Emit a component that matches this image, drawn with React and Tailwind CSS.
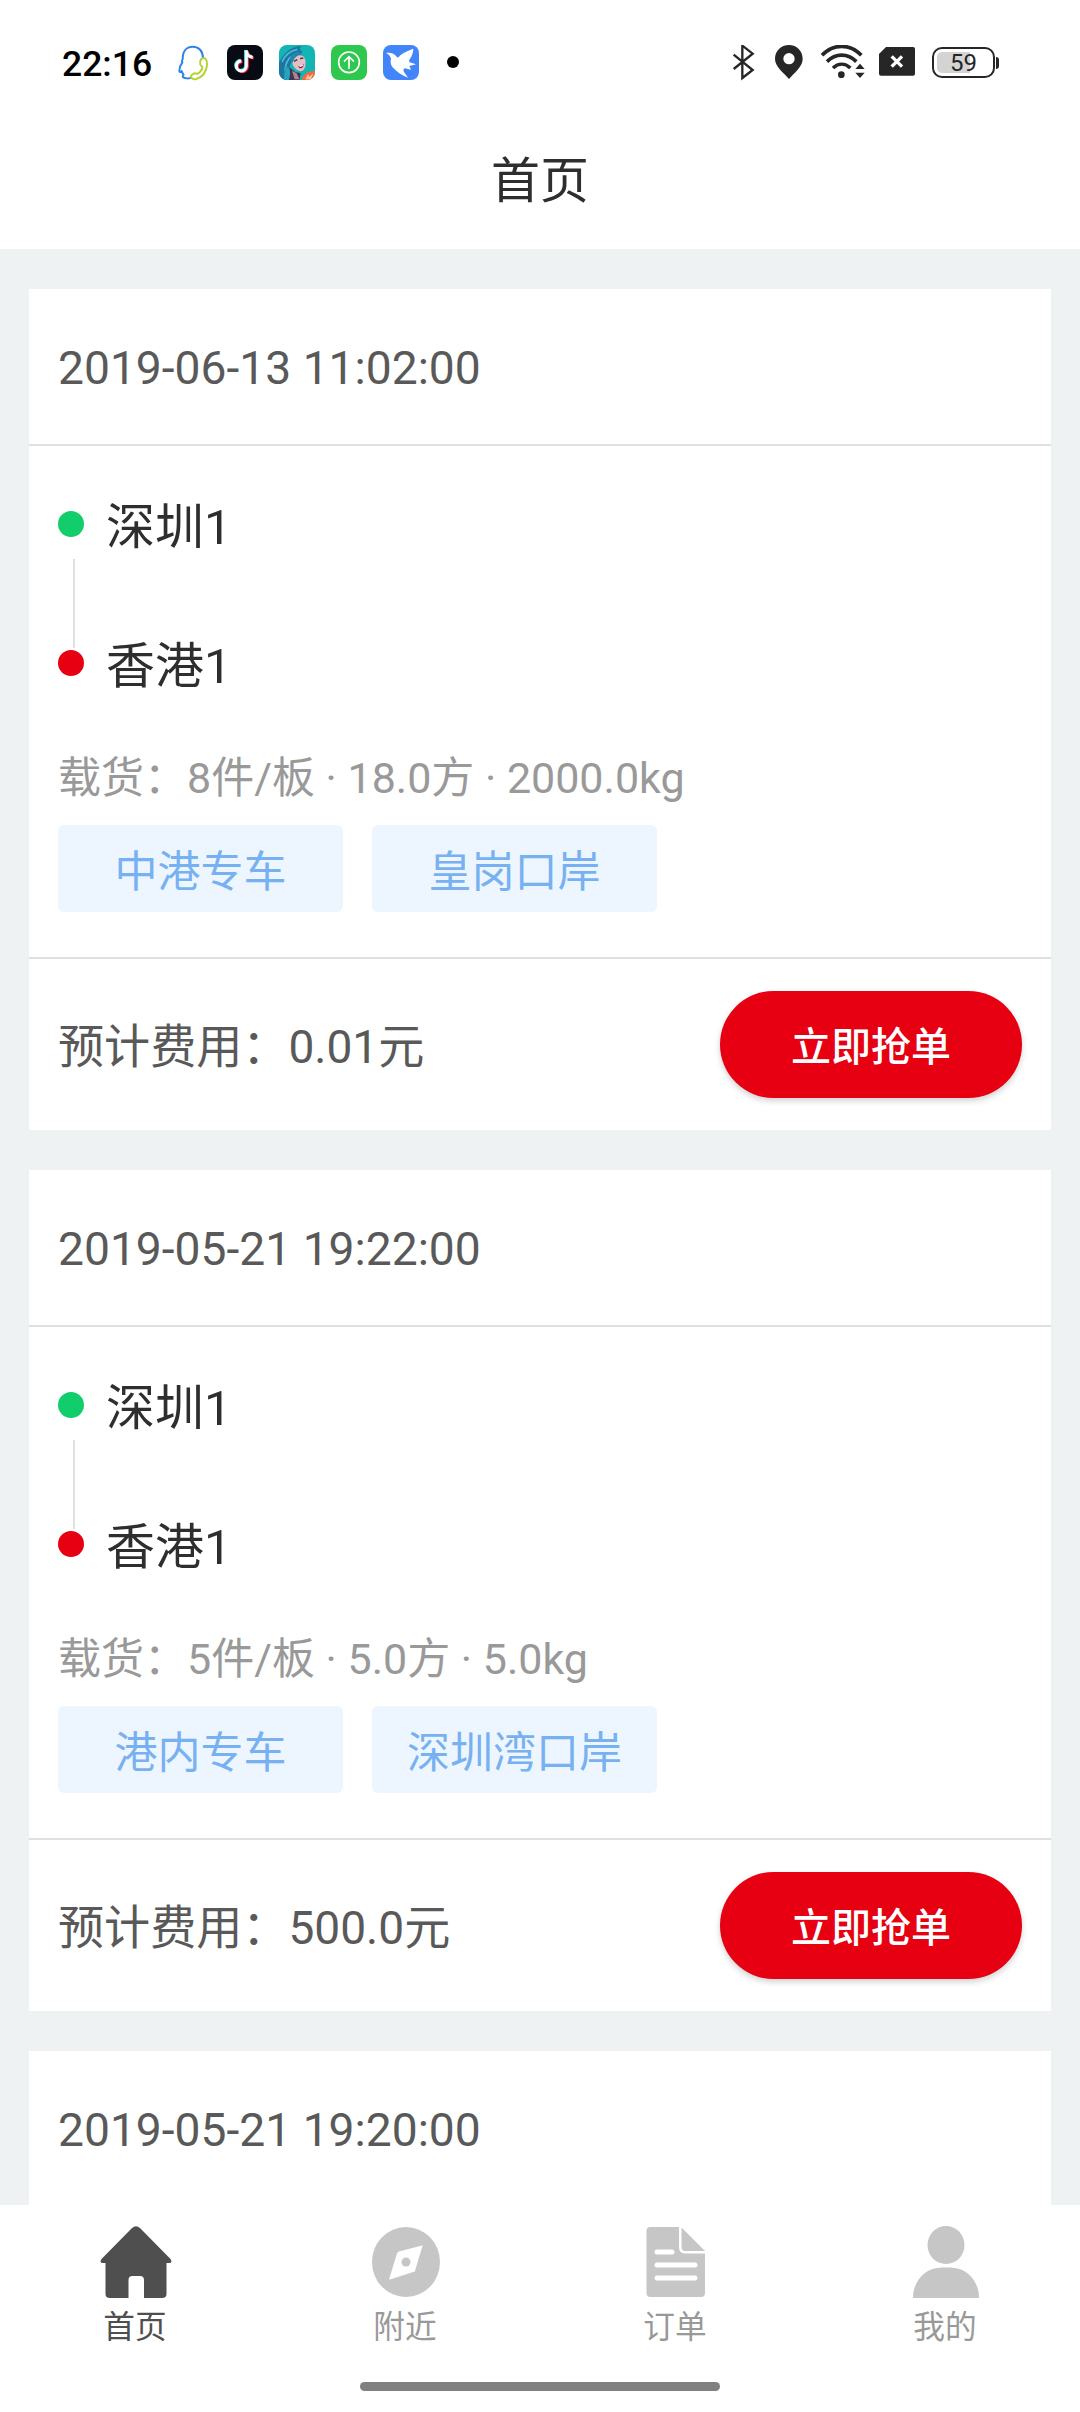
import { useState } from "react";

const orders = [
  {
    id: 1,
    time: "2019-06-13 11:02:00",
    detail: {
      from: "深圳1",
      to: "香港1",
      cargo: "8件/板 · 18.0方 · 2000.0kg",
      tags: ["中港专车", "皇岗口岸"],
      price: "0.01元",
    },
  },
  {
    id: 2,
    time: "2019-05-21 19:22:00",
    detail: {
      from: "深圳1",
      to: "香港1",
      cargo: "5件/板 · 5.0方 · 5.0kg",
      tags: ["港内专车", "深圳湾口岸"],
      price: "500.0元",
    },
  },
  { id: 3, time: "2019-05-21 19:20:00" },
];

function QQIcon() {
  return (
    <svg className="w-9 h-9" viewBox="405 45 108 108" fill="none" strokeLinejoin="round" strokeLinecap="round">
      <path
        d="M456 143c-8 3-22 3-27-1-2-3 0-6 2-8-3-3-5-7-6-11-3 4-7 4-7-1 0-9 3-17 9-25-2-4-1-7 1-10 0-22 10-37 30-37s31 15 31 35"
        stroke="#2a85e8"
        strokeWidth="6"
      />
      <path
        d="M487 85c9-4 15 5 14 19-1 20-13 38-32 43-9 2-17-2-16-8 1-5 6-7 10-9 4-2 6 3 10 1 7-4 12-10 14-18 1-5-5-4-6-9-1-6 0-16 6-19z"
        fill="#fff"
        stroke="#b4d334"
        strokeWidth="6"
      />
    </svg>
  );
}

function TikTokIcon() {
  const note = "M619 62v46a15 15 0 1 1-15-15";
  const flag = "M619 62c1 11 8 19 19 20";
  return (
    <svg className="w-9 h-9" viewBox="561 45 108 108" fill="none" strokeWidth="9">
      <rect x="561" y="45" width="108" height="105" rx="24" fill="#080a14" />
      <g stroke="#25f4ee" transform="translate(-2 -2)">
        <path d={note} />
        <path d={flag} />
      </g>
      <g stroke="#fe2c55" transform="translate(3 2)">
        <path d={note} />
        <path d={flag} />
      </g>
      <g stroke="#fff">
        <path d={note} />
        <path d={flag} />
      </g>
    </svg>
  );
}

function GameIcon() {
  return (
    <svg className="w-9 h-9" viewBox="717 45 108 108">
      <defs>
        <clipPath id="game">
          <rect x="717" y="45" width="108" height="105" rx="24" />
        </clipPath>
      </defs>
      <g clipPath="url(#game)">
        <rect x="717" y="45" width="108" height="108" fill="#12b5b3" />
        <path d="M717 96c8-10 14-22 26-32 12-12 30-16 40-17l-4 10 8 8-8 12-22 10-8 22-10 44h-22z" fill="#1c76a0" />
        <path d="M726 96c8-20 26-34 46-38M735 120c2-18 8-32 18-40" stroke="#49b9d6" strokeWidth="5" fill="none" />
        <path d="M754 88c4-14 22-20 34-12 8 8 10 20 8 32-2 10-8 16-15 16-12-2-26-16-27-36z" fill="#e3bfc2" />
        <path d="M750 84c6-16 20-22 33-14l8 8c-12-6-24 0-30 12l-5 12z" fill="#2088ae" />
        <path d="M762 94l10-5M780 86l10-2" stroke="#3c3058" strokeWidth="4" />
        <path d="M775 108c7 1 12-2 16-6 0 8-4 13-9 13-4 0-6-3-7-7z" fill="#8c2348" />
        <path d="M777 108l12-4v3l-8 4z" fill="#fff" />
        <path d="M748 112l18 14 16 4-4 23h-40z" fill="#3b3656" />
        <path d="M756 122l14 8 8 18h-14z" fill="#b97f8c" />
        <path d="M736 110c-4 14-3 28-4 42h14c4-12 6-24 2-38z" fill="#26a4bf" />
        <path d="M785 153c0-16 14-30 40-30v30z" fill="#f26a3a" />
        <path d="M796 148l8-16 4 8 12-10-6 14 6 6" fill="#ffc2a0" />
      </g>
    </svg>
  );
}

function UploadIcon() {
  return (
    <svg className="w-9 h-9" viewBox="873 45 108 108" fill="none" stroke="#fff" strokeWidth="5">
      <rect x="873" y="45" width="108" height="105" rx="24" fill="#2dc84d" stroke="none" />
      <circle cx="927" cy="97" r="31" />
      <path d="M927 117V81M912 95l15-15 15 15" />
    </svg>
  );
}

function BirdIcon() {
  return (
    <svg className="w-9 h-9" viewBox="1029 45 108 108">
      <rect x="1029" y="45" width="108" height="105" rx="24" fill="#4285fb" />
      <path
        d="M1038 69c12-2 22 0 30 9 3 5 6 6 9 2 10-12 26-17 43-24-1 12-4 23-11 32-2 4-2 7 0 9l19 6-20 5 5 11-18-4c-5 2-6 6-3 11l12 17c-18-8-33-17-45-30-8-9-8-18-6-27-2-9-7-13-15-17z"
        fill="#fff"
      />
    </svg>
  );
}

function StatusBar() {
  return (
    <div className="h-[110px] pt-4 pl-[62px] flex items-center text-[#262626]">
      <div className="w-[113px] pt-px text-[35.5px] leading-[38px] font-medium text-black">22:16</div>
      <div className="flex items-center gap-4">
        <QQIcon />
        <TikTokIcon />
        <GameIcon />
        <UploadIcon />
        <BirdIcon />
        <div className="ml-3 mb-0.5 w-3 h-3 rounded-full bg-black" />
      </div>
      <svg className="ml-[271px] w-[135px] h-9" viewBox="90 45 405 108" fill="none" stroke="#262626">
        {/* bluetooth */}
        <path d="M101 74l57 46-31 24V47l31 24-57 46" strokeWidth="7" />
        {/* location */}
        <path
          d="M267 45c-24 0-42 18-42 41 0 24 24 40 42 61 18-21 41-37 41-61 0-23-18-41-41-41zm0 24a17 17 0 1 1 0 34 17 17 0 0 1 0-34z"
          fill="#262626"
          stroke="none"
          fillRule="evenodd"
        />
        {/* wifi */}
        <path d="M366 76c34-36 84-36 118 0" strokeWidth="11" />
        <path d="M381 95c26-26 62-26 88 0" strokeWidth="11" />
        <path d="M399 114c16-15 36-15 52 0" strokeWidth="11" />
        <circle cx="424" cy="134" r="10" fill="#262626" stroke="none" />
        <path d="M466 117h28l-14-16zM466 128h28l-14 16z" fill="#262626" stroke="none" />
      </svg>
      <svg className="ml-3.5 w-9 h-9" viewBox="537 45 108 108">
        <path d="M558 51h81q6 0 6 6v74q0 6-6 6h-96q-6 0-6-6V72z" fill="#262626" />
        <path d="M575 79l31 31M606 79l-31 31" stroke="#fff" strokeWidth="10" />
      </svg>
      <div className="ml-[17px] mb-px w-[63px] h-[31px] rounded-[10px] border-2 border-[#262626] p-[3px]">
        <div className="relative h-full">
          <div className="w-[33px] h-full rounded-l-[5px] bg-[#d4d4d4]" />
          <span className="absolute inset-0 text-center text-[24px] leading-[23px]">59</span>
        </div>
      </div>
      <div className="ml-px mb-px w-[3px] h-3 rounded-r-sm bg-[#262626]" />
    </div>
  );
}

function OrderDetail({ detail }) {
  return (
    <>
      <div className="h-[513px] px-[29px] pt-[54px] border-b-2 border-[#e0e0e0]">
        <div className="flex gap-[22px]">
          <div className="w-[26px] pt-[11px] flex flex-col">
            <div className="h-[26px] rounded-full bg-[#12cd6b]" />
            <div className="mt-[22px] mb-0.5 ml-[15px] w-0.5 h-[89px] bg-[#e0e0e0]" />
            <div className="h-[26px] rounded-full bg-[#e60012]" />
          </div>
          <div className="pt-0.5 flex flex-col gap-[87px] text-[48.96px] leading-[52px] text-[#2e2e2e]">
            <div>{detail.from}</div>
            <div>{detail.to}</div>
          </div>
        </div>
        <div className="mt-14 text-[43px] leading-[58px] text-[#999999]">载货：{detail.cargo}</div>
        <div className="mt-[18px] flex gap-[29px]">
          {detail.tags.map((tag) => (
            <div
              key={tag}
              className="w-[285px] h-[87px] pt-[7px] flex items-center justify-center rounded-md bg-[#edf6ff] text-[43px] text-[#78b1f1]"
            >
              {tag}
            </div>
          ))}
        </div>
      </div>
      <div className="h-[171px] px-[29px] flex items-center justify-between">
        <div className="pt-1.5 text-[46.08px] text-[#595959]">预计费用：{detail.price}</div>
        <button className="w-[302px] h-[107px] pt-[7px] rounded-full bg-[#e60012] shadow-[0_3px_6px_rgba(0,0,0,0.18)] text-[40px] font-medium text-white">
          立即抢单
        </button>
      </div>
    </>
  );
}

function OrderCard({ order }) {
  return (
    <div className="shrink-0 bg-white">
      <div className="h-[157px] px-[29px] pt-[5px] flex items-center border-b-2 border-[#e0e0e0] text-[46.2px] text-[#595959]">
        {order.time}
      </div>
      {order.detail && <OrderDetail detail={order.detail} />}
    </div>
  );
}

function HomeIcon() {
  return (
    <svg className="ml-0.5 w-[72px] h-[72px]" viewBox="0 0 72 72" fill="currentColor">
      <path d="M32 2q4-3.500 8 0l30.500 31q2.500 4-1.500 4h-2.500V68q0 4-4.500 4H44V54q0-4-4-4h-7.500q-4 0-4 4v18H10q-4.500 0-4.500-4V37H3q-4 0-1.500-4z" />
    </svg>
  );
}

function CompassIcon() {
  return (
    <svg className="ml-0.5 w-[72px] h-[72px]" viewBox="0 0 72 72" fill="currentColor">
      <path
        d="M36 1a34 35 0 1 0 0 70 34 35 0 0 0 0-70zM52.500 20l-7.700 25.500L20 53.500q-1 0-.7-1L27 27.500q.5-1.500 2-2l23-6q1-.3.500.500z"
        fillRule="evenodd"
      />
      <circle cx="36" cy="36" r="4.500" />
    </svg>
  );
}

function OrderIcon() {
  return (
    <svg className="ml-0.5 w-[72px] h-[72px]" viewBox="0 0 72 72" fill="currentColor">
      <path d="M10.500 1h28.500v20q0 6.500 6 6.500h20V67q0 4-4 4h-50.500q-4 0-4-4V5q0-4 4-4z" />
      <path d="M41.500 1.500L65 25H45q-3.500 0-3.500-4z" />
      <path d="M17 26h15M17 39h38M17 52h38" stroke="#fff" strokeWidth="5" strokeLinecap="round" />
    </svg>
  );
}

function MineIcon() {
  return (
    <svg className="ml-0.5 w-[72px] h-[72px]" viewBox="0 0 72 72" fill="currentColor">
      <ellipse cx="36" cy="19" rx="18.500" ry="19" />
      <path d="M3 72c0-17 12-30.500 29-30.500h8c17 0 29 13.500 29 30.500z" />
    </svg>
  );
}

const tabs = [
  { label: "首页", Icon: HomeIcon },
  { label: "附近", Icon: CompassIcon },
  { label: "订单", Icon: OrderIcon },
  { label: "我的", Icon: MineIcon },
];

function TabBar() {
  const [active, setActive] = useState(0);

  return (
    <div className="shrink-0 h-[207px] bg-white flex flex-col items-center">
      <div className="w-full h-[177px] grid grid-cols-4">
        {tabs.map(({ label, Icon }, i) => (
          <button
            key={label}
            onClick={() => setActive(i)}
            className={`pt-[21px] flex flex-col items-center ${i === active ? "text-[#4f4f4f]" : "text-[#c6c6c6]"}`}
          >
            <Icon />
            <span className={`mt-2.5 text-[31.68px] leading-10 ${i === active ? "text-[#4f4f4f]" : "text-[#999999]"}`}>
              {label}
            </span>
          </button>
        ))}
      </div>
      <div className="w-[360px] h-[9px] rounded-full bg-[#808080]" />
    </div>
  );
}

export default function App() {
  return (
    <div
      lang="zh-CN"
      className="w-[1080px] h-[2412px] flex flex-col overflow-hidden bg-[#eef2f3] font-['Roboto','Noto_Sans_CJK_SC',sans-serif]"
    >
      <div className="shrink-0 h-[249px] bg-white">
        <StatusBar />
        <h1 className="pt-[41px] text-center text-[48.96px] leading-[62px] text-[#2e2e2e]">首页</h1>
      </div>
      <div className="flex-1 min-h-0 overflow-hidden px-[29px] pt-10 flex flex-col gap-10">
        {orders.map((order) => (
          <OrderCard key={order.id} order={order} />
        ))}
      </div>
      <TabBar />
    </div>
  );
}
